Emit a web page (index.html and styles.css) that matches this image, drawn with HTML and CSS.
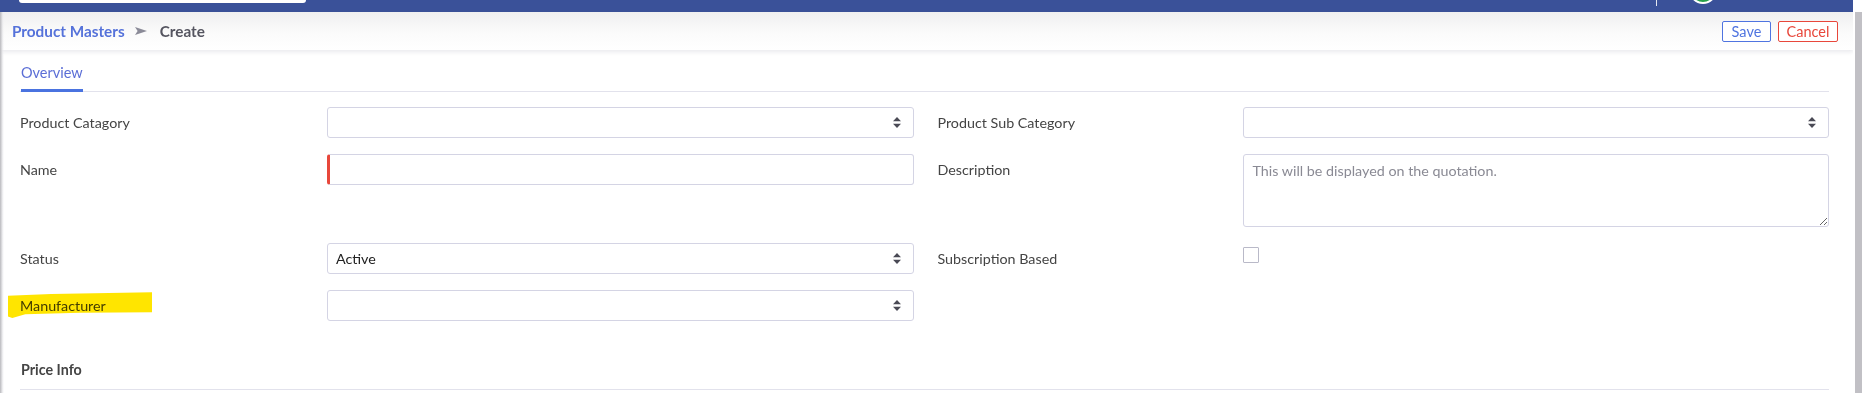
FILE: index.html
```html
<!DOCTYPE html>
<html lang="en">
<head>
<meta charset="utf-8">
<title>Product Masters - Create</title>
<link rel="stylesheet" href="styles.css">
</head>
<body>
<div class="app">
  <div class="main">
    <div class="topbar">
      <div class="search"></div>
      <div class="topbar-right">
        <span class="divider"></span>
        <span class="avatar"></span>
      </div>
    </div>
    <header class="pagehead">
      <nav class="breadcrumb">
        <span class="crumb-link">Product Masters</span>
        <svg class="crumb-sep" width="12" height="8" viewBox="0 0 12 8"><path d="M0 0 L12 4 L0 8 L2.6 4 Z" fill="#8b8b98"/></svg>
        <span class="crumb-current">Create</span>
      </nav>
      <div class="actions">
        <button class="btn btn-save">Save</button>
        <button class="btn btn-cancel">Cancel</button>
      </div>
    </header>
    <div class="content">
      <div class="tabs">
        <span class="tab active">Overview</span>
      </div>
      <div class="form">
        <div class="label">Product Catagory</div>
        <div class="select"><span class="value"></span><svg class="caret" width="8" height="11" viewBox="0 0 8 11"><path d="M4 0 L8 4.3 L0 4.3 Z M0 6.7 L8 6.7 L4 11 Z" fill="#4a4a55"/></svg></div>
        <div class="label label-r">Product Sub Category</div>
        <div class="select"><span class="value"></span><svg class="caret" width="8" height="11" viewBox="0 0 8 11"><path d="M4 0 L8 4.3 L0 4.3 Z M0 6.7 L8 6.7 L4 11 Z" fill="#4a4a55"/></svg></div>

        <div class="label">Name</div>
        <input class="input input-required" type="text">
        <div class="label label-r">Description</div>
        <textarea class="textarea" placeholder="This will be displayed on the quotation."></textarea>

        <div class="label">Status</div>
        <div class="select"><span class="value">Active</span><svg class="caret" width="8" height="11" viewBox="0 0 8 11"><path d="M4 0 L8 4.3 L0 4.3 Z M0 6.7 L8 6.7 L4 11 Z" fill="#4a4a55"/></svg></div>
        <div class="label label-r">Subscription Based</div>
        <div class="check-cell"><span class="checkbox"></span></div>

        <div class="label label-hl">Manufacturer</div>
        <div class="select"><span class="value"></span><svg class="caret" width="8" height="11" viewBox="0 0 8 11"><path d="M4 0 L8 4.3 L0 4.3 Z M0 6.7 L8 6.7 L4 11 Z" fill="#4a4a55"/></svg></div>
        <div class="label label-r"></div>
        <div></div>
      </div>
      <div class="section-title">Price Info</div>
    </div>
  </div>
  <div class="scrollcol"><div class="thumb"></div></div>
</div>
</body>
</html>
```

FILE: styles.css
```css
* { box-sizing: border-box; }
html, body { margin: 0; padding: 0; background: #fff; }
body {
  font-family: Lato, "Open Sans", "Liberation Sans", sans-serif;
  font-size: 14.3px;
  color: #444;
  overflow: hidden;
  height: 393px;
}
.app { display: flex; width: 1862px; height: 393px; }
.main {
  flex: 1;
  display: flex;
  flex-direction: column;
  position: relative;
  overflow: hidden;
}
.main::before {
  content: "";
  position: absolute;
  left: 0; top: 12px; bottom: 0;
  width: 4px;
  background: linear-gradient(to right, #b9b9bd, rgba(235,235,238,0.6) 70%, rgba(255,255,255,0));
  z-index: 5;
}
.topbar {
  height: 12px;
  flex: none;
  background: #3a5199;
  display: flex;
  align-items: flex-start;
  overflow: hidden;
}
.search {
  margin-left: 19px;
  width: 287px;
  height: 3px;
  background: #fff;
  border-radius: 0 0 4px 4px;
}
.topbar-right {
  margin-left: auto;
  padding-right: 136px;
  display: flex;
  align-items: flex-start;
}
.divider { width: 1px; height: 6px; background: #e6e8f0; }
.avatar {
  margin-left: 32px;
  margin-top: -24px;
  width: 28px; height: 28px;
  border-radius: 50%;
  background: #27a04a;
  border: 2px solid #fff;
}
.pagehead {
  height: 38px;
  flex: none;
  display: flex;
  align-items: center;
  justify-content: space-between;
  padding: 0 15px 0 12px;
  background: linear-gradient(#efeff0, #fbfbfb 55%, #fff);
  box-shadow: 0 2px 4px rgba(40,40,80,0.10);
  position: relative;
  z-index: 2;
}
.breadcrumb { display: flex; align-items: center; font-weight: 700; font-size: 15.3px; }
.crumb-link { color: #5572da; }
.crumb-sep { margin: 0 13px 0 10px; }
.crumb-current { color: #555560; }
.actions { display: flex; gap: 7px; }
.btn {
  height: 21px;
  padding: 0 4px;
  background: #fff;
  font-family: inherit;
  font-size: 14.5px;
  border-radius: 2px;
  line-height: 19px;
}
.btn-save { width: 49px; border: 1px solid #4f74e0; color: #4f74e0; }
.btn-cancel { width: 60px; border: 1px solid #e8473b; color: #e8473b; }
.content { padding: 0 24px 0 20px; }
.tabs {
  padding-top: 13px;
  padding-left: 1px;
  border-bottom: 1px solid #e2e2ec;
  display: flex;
}
.tab {
  line-height: 20px;
  padding-bottom: 6px;
  border-bottom: 3px solid transparent;
  margin-bottom: -1px;
  font-size: 14.5px;
}
.tab.active { color: #5b6ed6; border-bottom-color: #4a73e0; }
.form {
  margin-top: 15px;
  display: grid;
  grid-template-columns: 307px 1fr 329px 1fr;
  row-gap: 16px;
  align-items: start;
}
.label { line-height: 31px; color: #444; }
.label-r { padding-left: 24px; }
.select, .input {
  height: 31px;
  border: 1px solid #d4d4e4;
  border-radius: 3px;
  background: #fff;
}
.select {
  display: flex;
  align-items: center;
  justify-content: space-between;
  padding: 0 12px 0 8px;
  color: #222;
}
.input { width: 100%; font: inherit; padding: 0 8px; outline: none; }
.input-required { border-left: 3px solid #e8473b; }
.textarea {
  height: 73px;
  width: 100%;
  border: 1px solid #d4d4e4;
  border-radius: 3px;
  padding: 6px 9px;
  font: inherit;
  line-height: 20px;
  outline: none;
  resize: vertical;
  display: block;
}
.textarea::placeholder { color: #8a8a94; }
.check-cell { height: 31px; padding-top: 4px; }
.checkbox {
  display: block;
  width: 16px; height: 16px;
  border: 1px solid #b9b9c8;
  border-radius: 1px;
  background: #fff;
}
.label-hl { position: relative; }
.label-hl::before {
  content: "";
  position: absolute;
  left: -12px; top: 2px;
  width: 144px; height: 26px;
  background: #ffe500;
  mix-blend-mode: multiply;
  clip-path: polygon(0% 14%, 30% 8%, 100% 1%, 100% 78%, 50% 80%, 12% 86%, 3% 100%, 0% 94%);
}
.section-title {
  margin-top: 39px;
  line-height: 20px;
  padding: 0 0 9px 1px;
  font-weight: 700;
  color: #444;
  border-bottom: 1px solid #e2e2ec;
}
.scrollcol { width: 9px; flex: none; padding-top: 12px; display: flex; justify-content: flex-end; }
.thumb { width: 7px; height: 100%; background: #c1c0c5; }
```
